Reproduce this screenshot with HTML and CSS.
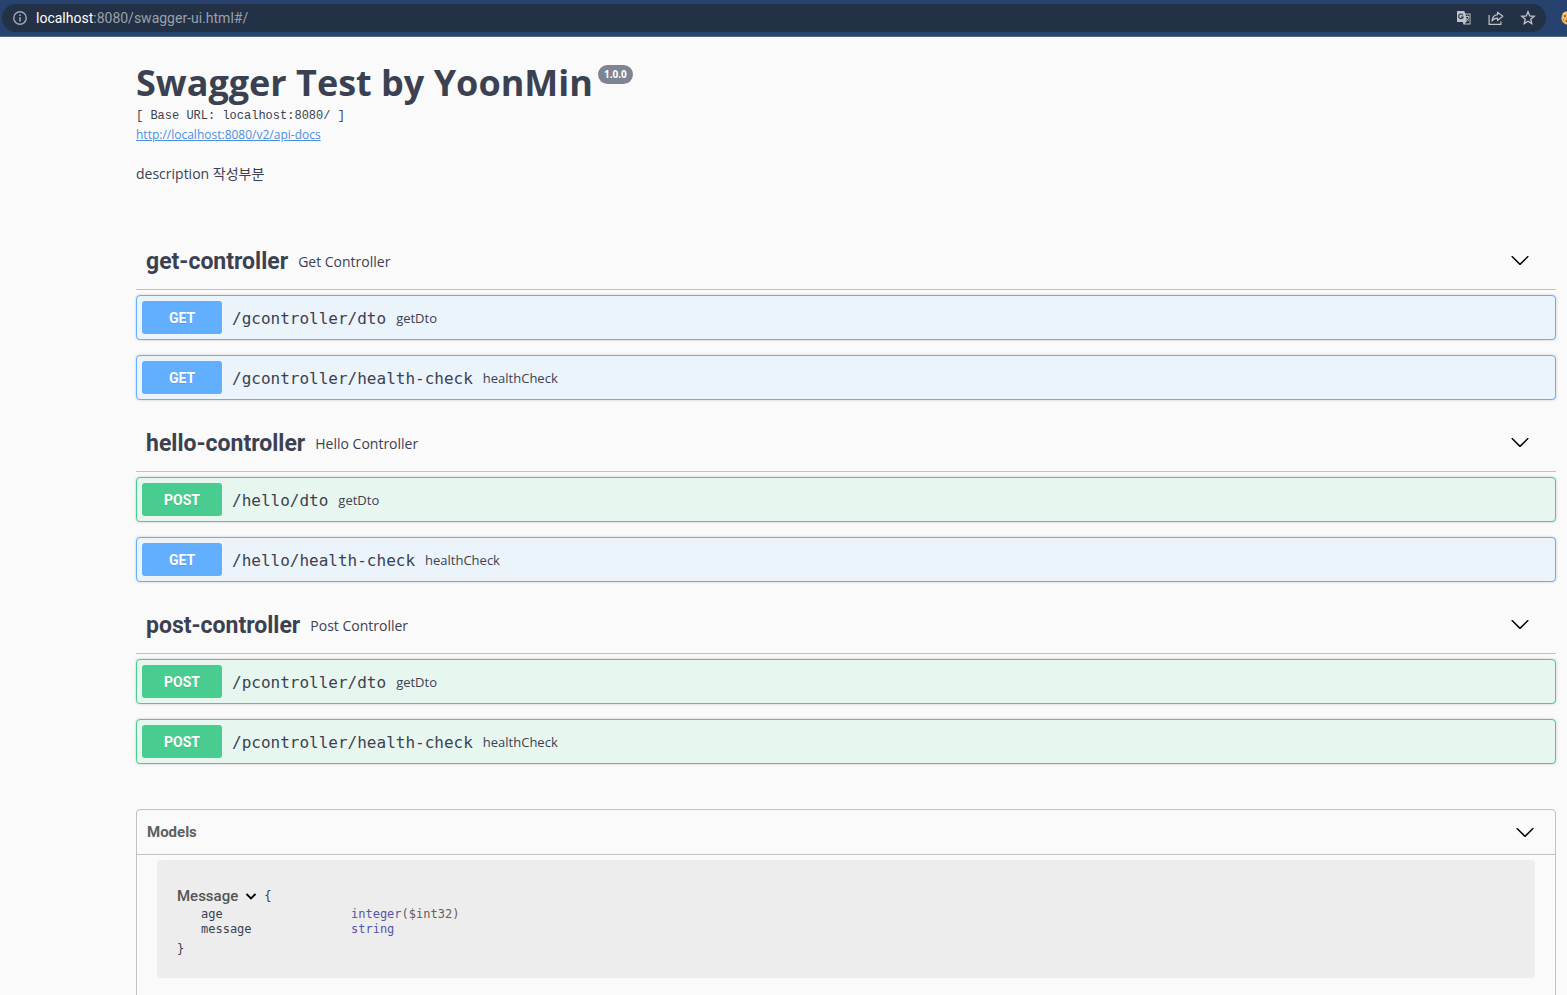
FILE: index.html
```html
<!DOCTYPE html>
<html lang="ko">
<head>
<meta charset="utf-8">
<title>Swagger UI</title>
<link rel="stylesheet" href="styles.css">
</head>
<body>
<svg width="0" height="0" class="sprite" aria-hidden="true">
  <symbol id="arrow" viewBox="0 0 20 20"><path d="M17.418 6.109c.272-.268.709-.268.979 0s.271.701 0 .969l-7.908 7.83c-.27.268-.707.268-.979 0l-7.908-7.83c-.27-.268-.27-.701 0-.969.271-.268.709-.268.979 0L10 13.25l7.418-7.141z"/></symbol>
</svg>
<header class="browser">
  <div class="address">
    <button class="icon-btn" type="button" aria-label="Site information">
      <svg width="16" height="16" viewBox="0 0 16 16"><circle cx="8" cy="8" r="6.2" fill="none" stroke="#a3a9b2" stroke-width="1.4"/><path d="M7.2 7.2h1.6V11.400H7.200zM7.200 4.500h1.600v1.600H7.200z" fill="#a3a9b2"/></svg>
    </button>
    <span class="url"><span class="host">localhost</span>:8080/swagger-ui.html#/</span>
    <div class="tools">
      <button class="icon-btn" type="button" aria-label="Translate">
        <svg width="16" height="16" viewBox="0 0 16 16"><path d="M1 1h7.300l.9 2.500H14.500v11H7.500L6.800 12H1z" fill="#c2c4c7"/><path d="M9.600 4.500h4v9H8.600l2.200-2.200z" fill="#26324a"/><path d="M7 5.200A2.300 2.300 0 1 0 7.200 7H5" fill="none" stroke="#26324a" stroke-width="1.100"/><path d="M9.800 6.500h3.500M11.500 5.500v1M10.200 8l2.500 3M12.800 7c-.3 1.500-1 2.800-2.300 3.800" fill="none" stroke="#c2c4c7" stroke-width=".9"/></svg>
      </button>
      <button class="icon-btn" type="button" aria-label="Share">
        <svg width="16" height="16" viewBox="0 0 16 16" fill="none" stroke="#c2c4c7" stroke-width="1.200"><path d="M1.100 5v9.400h11.800V11.500"/><path d="M9.500 2.200 14.800 6.300 9.500 10.500V8.200C7 8.200 5.300 9 4 11c.2-3.500 2.200-6 5.500-6.400z" stroke-linejoin="round"/></svg>
      </button>
      <button class="icon-btn" type="button" aria-label="Bookmark">
        <svg width="16" height="16" viewBox="0 0 16 16"><path d="M8 1.800 9.700 6l4.500.3-3.500 2.900 1.100 4.400L8 11.200l-3.800 2.400 1.100-4.400L1.800 6.300 6.300 6z" fill="none" stroke="#c2c4c7" stroke-width="1.300"/></svg>
      </button>
    </div>
  </div>
  <svg class="cookie" width="6" height="14" viewBox="0 0 6 14"><circle cx="7" cy="7" r="6.700" fill="#f0b860"/><path d="M2 3 5 1.500" stroke="#f8d48c" stroke-width="1.500"/><circle cx="4" cy="5" r="1" fill="#84502b"/><circle cx="2.500" cy="9" r=".8" fill="#b8742f"/><circle cx="5.500" cy="10" r="1" fill="#84502b"/></svg>
</header>
<main class="page">
  <section class="info">
    <h1 class="title">Swagger Test by YoonMin<span class="version">1.0.0</span></h1>
    <div class="base-url">[ Base URL: localhost:8080/ ]</div>
    <a class="docs" href="#api-docs">http://localhost:8080/v2/api-docs</a>
    <p class="description">description 작성부분</p>
  </section>

  <section class="tag">
    <div class="tag-head"><h2 class="tag-name">get-controller</h2><span class="tag-text">Get Controller</span><button class="toggle" type="button" aria-label="Collapse get-controller"><svg width="20" height="20"><use href="#arrow"/></svg></button></div>
    <div class="op get"><button class="method" type="button">GET</button><span class="path">/gcontroller/dto</span><span class="summary">getDto</span></div>
    <div class="op get"><button class="method" type="button">GET</button><span class="path">/gcontroller/health-check</span><span class="summary">healthCheck</span></div>
  </section>
  <section class="tag">
    <div class="tag-head"><h2 class="tag-name">hello-controller</h2><span class="tag-text">Hello Controller</span><button class="toggle" type="button" aria-label="Collapse hello-controller"><svg width="20" height="20"><use href="#arrow"/></svg></button></div>
    <div class="op post"><button class="method" type="button">POST</button><span class="path">/hello/dto</span><span class="summary">getDto</span></div>
    <div class="op get"><button class="method" type="button">GET</button><span class="path">/hello/health-check</span><span class="summary">healthCheck</span></div>
  </section>
  <section class="tag">
    <div class="tag-head"><h2 class="tag-name">post-controller</h2><span class="tag-text">Post Controller</span><button class="toggle" type="button" aria-label="Collapse post-controller"><svg width="20" height="20"><use href="#arrow"/></svg></button></div>
    <div class="op post"><button class="method" type="button">POST</button><span class="path">/pcontroller/dto</span><span class="summary">getDto</span></div>
    <div class="op post"><button class="method" type="button">POST</button><span class="path">/pcontroller/health-check</span><span class="summary">healthCheck</span></div>
  </section>

  <section class="models">
    <div class="models-head"><h3 class="models-title">Models</h3><button class="toggle" type="button" aria-label="Collapse models"><svg width="20" height="20"><use href="#arrow"/></svg></button></div>
    <div class="model">
      <div class="model-head"><span class="model-name">Message</span><button class="mini" type="button" aria-label="Collapse Message"><svg width="12" height="12" viewBox="0 0 12 12"><path d="M1.500 4 6 8.500 10.500 4" fill="none" stroke="#000" stroke-width="1.800"/></svg></button><span>{</span></div>
      <table class="props">
        <tbody>
          <tr><td class="key">age</td><td><span class="type">integer</span><span class="format">($int32)</span></td></tr>
          <tr><td class="key">message</td><td><span class="type">string</span></td></tr>
        </tbody>
      </table>
      <div class="close">}</div>
    </div>
  </section>
</main>
</body>
</html>
```

FILE: styles.css
```css
* { box-sizing: border-box; }
body {
  margin: 0;
  height: 100vh;
  overflow: hidden;
  background: #fafafa;
  color: #3b4151;
  font-family: "Open Sans", "Noto Sans CJK KR", sans-serif;
}
button { border: 0; padding: 0; background: none; cursor: pointer; }
svg { display: block; }
.sprite { position: absolute; }

.browser {
  display: flex;
  align-items: center;
  gap: 15px;
  padding: 4px 0 4px 2px;
  background: #27426f;
  border-bottom: 1px solid #4c6590;
}
.address {
  flex: 1;
  display: flex;
  align-items: center;
  gap: 8px;
  height: 28px;
  padding: 0 10px;
  border-radius: 14px;
  background: #233146;
}
.url { color: #99a1ac; font: 14px/20px Roboto, sans-serif; }
.host { color: #fff; }
.tools { display: flex; gap: 16px; margin-left: auto; }

.page { padding: 0 11px 0 136px; }

.info { padding-top: 24px; margin-bottom: 49px; }
.title {
  display: flex;
  align-items: flex-start;
  gap: 5px;
  margin: 0 0 3px;
  font-size: 36px;
  line-height: 43px;
  font-weight: 700;
}
.version {
  margin-top: 4px;
  padding: 0 6px;
  border-radius: 10px;
  background: #7d8492;
  color: #fff;
  font-size: 10px;
  line-height: 19px;
}
.base-url { font: 12px/18px "Liberation Mono", monospace; }
.docs { display: block; width: fit-content; color: #4990e2; font-size: 12px; line-height: 20px; }
.description { margin: 19px 0 0; font-size: 14px; line-height: 20px; }

.tag-head {
  display: flex;
  align-items: center;
  gap: 10px;
  height: 57px;
  padding: 2px 26px 0 10px;
  margin-bottom: 5px;
  border-bottom: 1px solid #bfc1c5;
}
.tag-name { margin: 0; font: 700 23px/30px Roboto, sans-serif; }
.tag-text { font-size: 14px; line-height: 20px; }
.toggle { margin-left: auto; }
.tag-head .toggle { padding-bottom: 4px; }

.op {
  display: flex;
  align-items: center;
  gap: 10px;
  height: 45px;
  padding: 5px;
  margin-bottom: 15px;
  border: 1px solid;
  border-radius: 4px;
  box-shadow: 0 0 3px rgba(0, 0, 0, .19);
}
.get { border-color: #61affe; background: #ebf3fb; }
.post { border-color: #49cc90; background: #e8f6f0; }
.method {
  width: 80px;
  height: 33px;
  border-radius: 3px;
  color: #fff;
  font: 700 14px/20px Roboto, sans-serif;
  text-shadow: 0 1px 0 rgba(0, 0, 0, .1);
}
.get .method { background: #61affe; }
.post .method { background: #49cc90; }
.path { padding-top: 2px; font: 16px/20px "DejaVu Sans Mono", monospace; }
.summary { font-size: 13px; line-height: 20px; }

.models {
  margin-top: 45px;
  padding-bottom: 20px;
  border: 1px solid #bfc1c5;
  border-radius: 4px;
}
.models-head {
  display: flex;
  align-items: center;
  height: 45px;
  padding: 0 20px 0 10px;
  margin-bottom: 5px;
  border-bottom: 1px solid #bfc1c5;
}
.models-title { margin: 0; color: #606060; font: 700 15px/20px Roboto, sans-serif; }
.model {
  margin: 0 20px;
  padding: 25px 20px 18px;
  border-radius: 4px;
  background: #ededed;
  font: 12px/15px "DejaVu Sans Mono", monospace;
}
.model-head { display: flex; align-items: center; height: 22px; }
.model-name { color: #555; font: 500 15px/20px Roboto, sans-serif; }
.mini { margin: 0 7px; }
.props { margin-left: 24px; border-collapse: collapse; }
.props td { padding: 0; }
.props .key { width: 150px; }
.type { color: #55a; }
.format { color: #606060; }
.close { padding: 5px 0 3px; line-height: 15px; }
```
